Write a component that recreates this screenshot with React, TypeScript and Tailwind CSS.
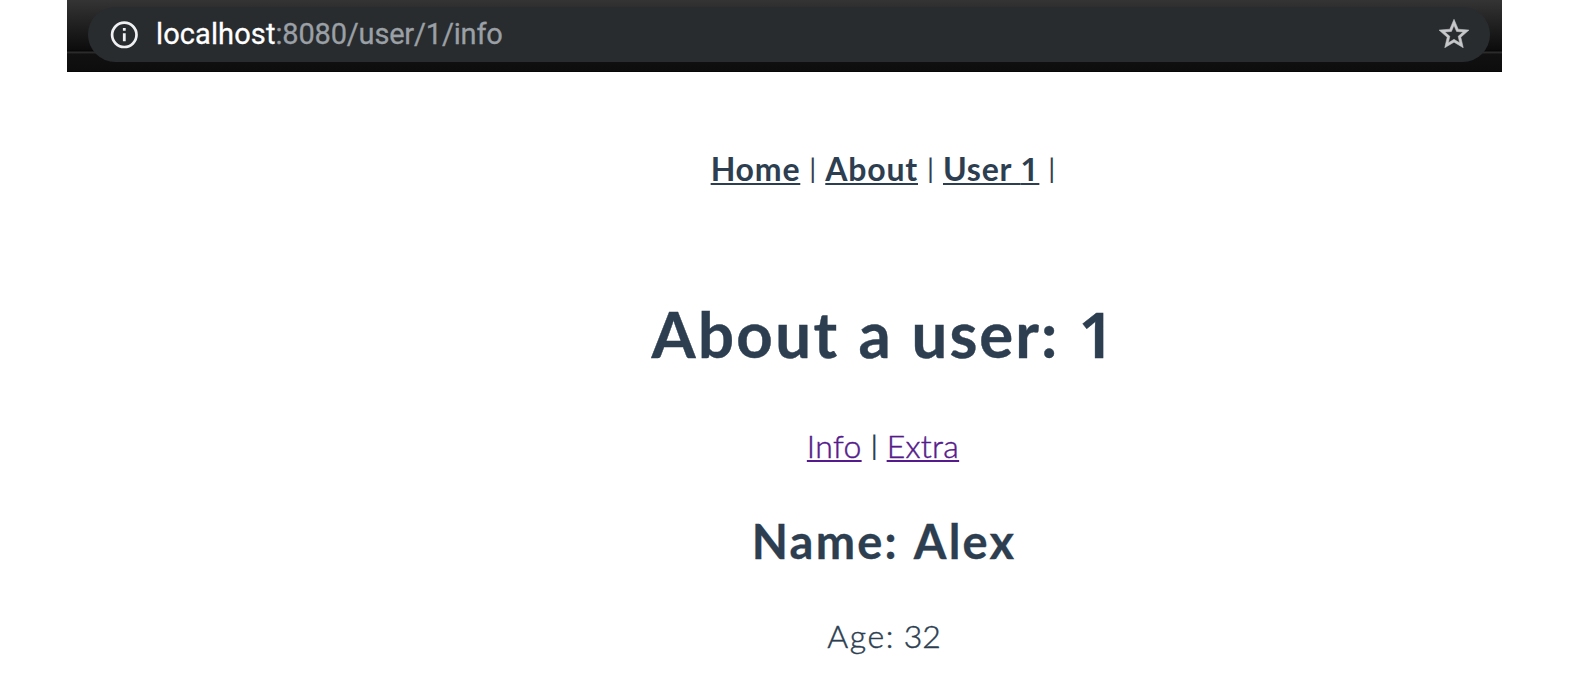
import React from "react";

function Bar() {
  return (
    <span className="relative -top-[3px] inline-block w-[25px] text-center text-[26px] font-normal leading-none tracking-normal [-webkit-text-stroke:0.2px_#2c3e50]">|</span>
  );
}

function AddressBar() {
  return (
    <header className="ml-[67px] h-[72px] w-[1435px] bg-[linear-gradient(to_bottom,#343434_0px,#0c0c0c_50px,#050505_51px,#303030_52px,#262626_53px,#111_54px,#0d0d0d_71px,#000_72px)] pl-[21px] pt-[7px]">
      <div className="flex h-[55px] w-[1402px] items-center rounded-full bg-[#292c2f] pl-[22px] pr-[21px] font-['Roboto',sans-serif] text-[29px]">
        <svg viewBox="0 0 28 28" className="size-[28px] shrink-0" fill="none">
          <circle cx="14.3" cy="13.8" r="12.2" stroke="#eef0f2" strokeWidth="2.7" />
          <path d="M12.9 7.1h2.8v2.7h-2.8zM12.9 12.2h2.8v8h-2.8z" fill="#eef0f2" />
        </svg>
        <p className="ml-[18px] whitespace-nowrap leading-none">
          <span className="tracking-[0.1px] text-white [-webkit-text-stroke:0.3px_#fff]">localhost</span>
          <span className="tracking-[-0.18px] text-[#9aa0a6] [-webkit-text-stroke:0.3px_#9aa0a6]">:8080/user/1/info</span>
        </p>
        <svg viewBox="2 2 20 19" className="mb-[2px] ml-auto h-[29px] w-[30px] shrink-0" fill="#c6c8ca" stroke="#c6c8ca" strokeWidth="0.35">
          <path d="M22 9.24l-7.19-.62L12 2 9.19 8.63 2 9.24l5.46 4.73L5.82 21 12 17.27 18.18 21l-1.63-7.03L22 9.24zM12 15.4l-3.76 2.27 1-4.28-3.32-2.88 4.38-.38L12 6.1l1.71 4.04 4.38.38-3.32 2.88 1 4.28L12 15.4z" />
        </svg>
      </div>
    </header>
  );
}

export default function App() {
  return (
    <div className="h-[673px] overflow-hidden bg-white font-['Lato',sans-serif] text-[#2c3e50]">
      <AddressBar />
      <main className="flex flex-col items-center whitespace-nowrap pl-[195px]">
        <nav className="ml-[10px] mt-[77px] h-10 text-[32px] font-bold leading-10 tracking-[0.8px]">
          <a className="underline decoration-2 underline-offset-[2px]">Home</a>
          <Bar />
          <a className="underline decoration-2 underline-offset-[2px]">About</a>
          <Bar />
          <a className="underline decoration-2 underline-offset-[2px]">User <span className="font-['Noto_Sans',sans-serif] font-semibold">1</span></a>
          <Bar />
        </nav>
        <h1 className="ml-[3px] mt-[105px] h-20 text-[63.5px] font-bold leading-[80px] tracking-[2px] [-webkit-text-stroke:0.4px_#2c3e50] [word-spacing:1.5px]">
          <span className="tracking-[2.4px]">About</span> a user: <span className="font-['Noto_Sans',sans-serif] font-semibold">1</span>
        </h1>
        <div className="ml-px mt-[52px] h-10 text-[32px] font-light leading-10 tracking-[0.3px]">
          <a className="text-[#551a8b] underline decoration-2 underline-offset-[2px] [-webkit-text-stroke:0.45px_#551a8b]">Info</a>
          <Bar />
          <a className="text-[#551a8b] underline decoration-2 underline-offset-[2px] [-webkit-text-stroke:0.45px_#551a8b]">Extra</a>
        </div>
        <h2 className="ml-[3px] mt-[45px] h-[60px] text-[47px] font-bold leading-[60px] tracking-[2.2px] [-webkit-text-stroke:0.3px_#2c3e50] [word-spacing:3px]">Name: Alex</h2>
        <p className="ml-[3px] mt-[45px] h-10 text-[32px] font-light leading-10 [-webkit-text-stroke:0.45px_#2c3e50]">
          <span className="tracking-[1.6px]">Age:</span> 32
        </p>
      </main>
    </div>
  );
}
